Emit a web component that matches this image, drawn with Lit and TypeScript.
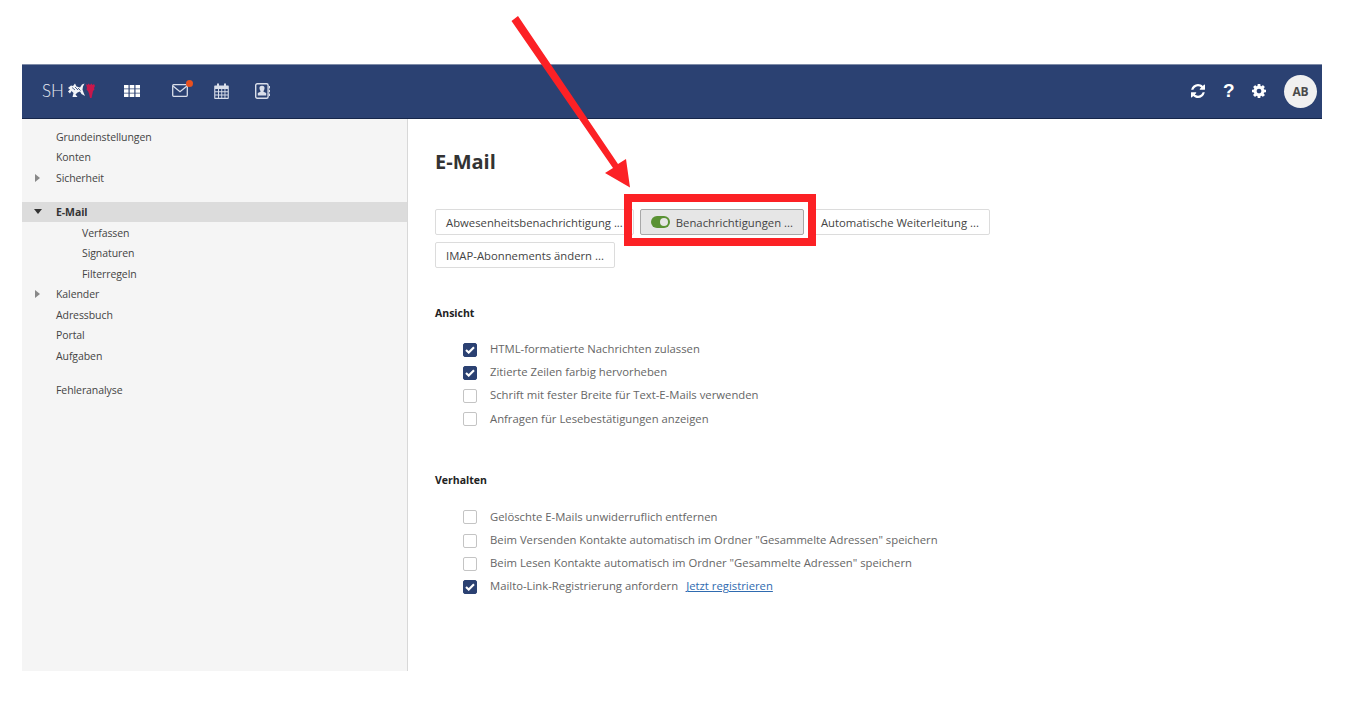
import { LitElement, html, css, svg } from "lit";
import { customElement } from "lit/decorators.js";

const navItems = [
  { label: "Grundeinstellungen" },
  { label: "Konten" },
  { label: "Sicherheit", arrow: "right", gapAfter: true },
  { label: "E-Mail", arrow: "down", active: true },
  { label: "Verfassen", sub: true },
  { label: "Signaturen", sub: true },
  { label: "Filterregeln", sub: true },
  { label: "Kalender", arrow: "right" },
  { label: "Adressbuch" },
  { label: "Portal" },
  { label: "Aufgaben", gapAfter: true },
  { label: "Fehleranalyse" },
];

const ansicht = [
  { label: "HTML-formatierte Nachrichten zulassen", on: true },
  { label: "Zitierte Zeilen farbig hervorheben", on: true },
  { label: "Schrift mit fester Breite für Text-E-Mails verwenden", on: false },
  { label: "Anfragen für Lesebestätigungen anzeigen", on: false },
];

const verhalten = [
  { label: "Gelöschte E-Mails unwiderruflich entfernen", on: false },
  { label: 'Beim Versenden Kontakte automatisch im Ordner "Gesammelte Adressen" speichern', on: false },
  { label: 'Beim Lesen Kontakte automatisch im Ordner "Gesammelte Adressen" speichern', on: false },
  { label: "Mailto-Link-Registrierung anfordern", on: true, link: "Jetzt registrieren" },
];

// lion and stag of the state logo, rough shapes only
const logo = svg`<svg class="logo" width="28" height="15" viewBox="0 0 28 15">
  <path fill="#f2f4f8" d="M0 5 L3 2.500 L5 3 L7 .5 L8.500 3.500 L12 4.500 L14 1.500 L16.500 .5 L15 3.500 L14.500 6.500 L15.500 9.500 L17 13 L13.500 11 L12 8.500 L9.500 9.500 L7.500 11.500 L9.500 14 L4.500 14 L5.500 10 L3.500 8 L2 10.500 L0 8.500 L2 6.500 Z"/>
  <path stroke="#2b4172" stroke-width=".8" fill="none" d="M4 4.500 L7 7 M7 4 L10 7 M10 5 L12.500 7.500"/>
  <path fill="#c8174b" d="M18 1 L19.500 2 L20.500 .5 L22 2 L23.500 .5 L24.500 2 L26 1 L27 3 L26 5 L26.500 6.500 L25 8 L24.500 10.500 L23.500 15 L22 15 L21 10.500 L20 8 L18.500 6.500 L19 5 Z"/>
</svg>`;

const gridIcon = svg`<svg width="16" height="12" viewBox="0 0 16 12" fill="#fff">
  <path d="M0 0h4.500v3.400H0zM5.700 0h4.600v3.400H5.700zM11.500 0H16v3.400h-4.500zM0 4.300h4.500v3.400H0zM5.700 4.300h4.600v3.400H5.700zM11.500 4.300H16v3.400h-4.500zM0 8.600h4.500V12H0zM5.700 8.600h4.600V12H5.700zM11.500 8.600H16V12h-4.500z"/>
</svg>`;

const mailIcon = svg`<svg width="16" height="13" viewBox="0 0 16 13" fill="none" stroke="#d9deea" stroke-width="1.300">
  <rect x=".7" y=".7" width="14.600" height="11.600" rx="1"/><path d="M1 2l7 5.700L15 2"/>
</svg>`;

const calendarIcon = svg`<svg width="15" height="16" viewBox="0 0 15 16">
  <path fill="#d9deea" d="M1.200 2.500H3V.5h2v2h5v-2h2v2h1.800c.6 0 1 .4 1 1V15c0 .5-.4 1-1 1H1.200c-.6 0-1-.5-1-1V3.500c0-.6.4-1 1-1z"/>
  <path fill="#2b4172" d="M1.300 6h2.700v2.200H1.300zM5 6h2.300v2.200H5zM8.200 6h2.300v2.200H8.200zM11.400 6h2.300v2.200h-2.300zM1.300 9.200h2.700v2.200H1.300zM5 9.200h2.300v2.200H5zM8.200 9.200h2.300v2.200H8.200zM11.400 9.200h2.300v2.200h-2.300zM1.300 12.400h2.700v2.400H1.300zM5 12.400h2.300v2.400H5zM8.200 12.400h2.300v2.400H8.200zM11.400 12.400h2.300v2.400h-2.300z"/>
</svg>`;

const contactIcon = svg`<svg width="15" height="16" viewBox="0 0 15 16">
  <rect x=".7" y=".7" width="12.400" height="14.600" rx="1.500" fill="none" stroke="#d9deea" stroke-width="1.400"/>
  <path fill="#d9deea" d="M14 3h1v2.500h-1zM14 6.800h1v2.500h-1zM14 10.500h1V13h-1zM7 2.800a2.500 2.500 0 0 1 2.500 2.800c0 1-.5 1.800-1 2.400v.8l2.700 1.200v2.600H2.800V10l2.700-1.200V8c-.5-.6-1-1.400-1-2.400A2.500 2.500 0 0 1 7 2.800z"/>
</svg>`;

const syncIcon = svg`<svg width="14" height="14" viewBox="0 0 1536 1536" fill="#fff">
  <path d="M1511 928q0 5-1 7-64 268-268 434.500T764 1536q-146 0-282.500-55T238 1324l-129 129q-19 19-45 19t-45-19-19-45V960q0-26 19-45t45-19h448q26 0 45 19t19 45-19 45l-137 137q71 66 161 102t187 36q134 0 250-65t186-179q11-17 53-117 8-23 30-23h192q13 0 22.500 9.500t9.500 22.500zm25-800v448q0 26-19 45t-45 19h-448q-26 0-45-19t-19-45 19-45l138-138Q969 256 768 256q-134 0-250 65T332 500q-11 17-53 117-8 23-30 23H50q-13 0-22.500-9.500T18 608v-7q65-268 270-434.500T768 0q146 0 284 55.500T1297 212l130-129q19-19 45-19t45 19 19 45z"/>
</svg>`;

const cogIcon = svg`<svg width="14" height="14" viewBox="0 0 1536 1536" fill="#fff">
  <path d="M1024 768q0-106-75-181t-181-75-181 75-75 181 75 181 181 75 181-75 75-181zm512-109v222q0 12-8 23t-20 13l-185 28q-19 54-39 91 35 50 107 138 10 12 10 25t-9 23q-27 37-99 108t-94 71q-12 0-26-9l-138-108q-44 23-91 38-16 136-29 186-7 28-36 28H657q-14 0-24.500-8.500T621 1506l-28-184q-49-16-90-37l-141 107q-10 9-25 9-14 0-25-11-126-114-165-168-7-10-7-23 0-12 8-23 15-21 51-66.500t54-70.500q-27-50-41-99L29 913q-13-2-21-12.500T0 877V655q0-12 8-23t19-13l186-28q14-46 39-92-40-57-107-138-10-12-10-24 0-10 9-23 26-36 98.500-107.500T337 135q13 0 26 10l138 107q44-23 91-38 16-136 29-186 7-28 36-28h222q14 0 24.500 8.500T915 30l28 184q49 16 90 37l142-107q9-9 24-9 13 0 25 10 129 119 165 170 7 8 7 22 0 12-8 23-15 21-51 66.500t-54 70.500q26 50 41 98l183 28q13 2 21 12.500t8 23.500z"/>
</svg>`;

const checkMark = svg`<svg width="10" height="8" viewBox="0 0 10 8" fill="none" stroke="#fff" stroke-width="2.100">
  <path d="M1 4l2.700 2.600L9 1.200"/>
</svg>`;

@customElement("app-root")
export class AppRoot extends LitElement {
  static styles = css`
    :host {
      display: block;
      position: relative;
      height: 713px;
      background: #fff;
      font-family: "Open Sans", "Liberation Sans", sans-serif;
      font-size: 10.5px;
      letter-spacing: -0.08px;
      color: #333;
      overflow: hidden;
    }

    .frame {
      display: flex;
      flex-direction: column;
      width: 1300px;
      height: 607px;
      margin-left: 22px;
      padding-top: 64px;
    }

    header {
      flex: none;
      display: flex;
      align-items: center;
      box-sizing: border-box;
      height: 55px;
      background: #2b4172;
      border-top: 1px solid #7f8ca8;
      border-bottom: 1px solid #16264a;
      color: #fff;
    }

    .brand {
      display: flex;
      align-items: center;
      gap: 4px;
      width: 102px;
      padding-left: 20px;
      padding-bottom: 2px;
      box-sizing: border-box;
    }

    .brand span {
      font-family: Lato, sans-serif;
      font-weight: 300;
      font-size: 17px;
      letter-spacing: 0;
      color: #e8ebf2;
    }

    .apps {
      display: flex;
      align-items: center;
      gap: 20px;
      padding-bottom: 2px;
    }

    .apps > * {
      display: flex;
    }

    .mail {
      position: relative;
      margin-left: 12px;
      margin-right: 6px;
    }

    .calendar {
      margin-right: 6px;
    }

    .dot {
      position: absolute;
      top: -4px;
      right: -5px;
      width: 7px;
      height: 7px;
      border-radius: 50%;
      background: #e8501f;
    }

    .tools {
      display: flex;
      align-items: center;
      margin-left: auto;
      padding-right: 5px;
    }

    .tools svg {
      display: block;
      margin-bottom: 2px;
    }

    .help {
      width: 10px;
      margin: 0 19px 2px 18px;
      font: 700 19px "Liberation Sans", sans-serif;
      line-height: 17px;
      text-align: center;
    }

    .avatar {
      display: flex;
      align-items: center;
      justify-content: center;
      width: 33px;
      height: 33px;
      margin-left: 18px;
      border-radius: 50%;
      background: #f0f0f0;
      color: #4a4a4a;
      font-size: 12px;
      font-weight: 700;
    }

    .body {
      flex: 1;
      display: flex;
      min-height: 0;
    }

    aside {
      flex: none;
      box-sizing: border-box;
      width: 386px;
      padding-top: 7.500px;
      background: #f5f5f5;
      border-right: 1px solid #d8d8d8;
    }

    .nav-row {
      display: flex;
      align-items: center;
      height: 20.500px;
      padding-left: 34px;
      color: #444;
    }

    .nav-row.sub {
      padding-left: 60px;
    }

    .nav-row.gap {
      margin-bottom: 13.500px;
    }

    .nav-row.active {
      margin-bottom: 0.500px;
      background: #dcdcdc;
      font-weight: 700;
      color: #333;
    }

    .arrow {
      position: absolute;
      width: 0;
      height: 0;
      margin-left: -21px;
    }

    .arrow.right {
      border-left: 5px solid #888;
      border-top: 4px solid transparent;
      border-bottom: 4px solid transparent;
    }

    .arrow.down {
      margin-left: -22px;
      border-top: 5px solid #333;
      border-left: 4.500px solid transparent;
      border-right: 4.500px solid transparent;
    }

    main {
      flex: 1;
      padding: 28px 0 0 27px;
    }

    h1 {
      margin: 0;
      font-size: 20px;
      line-height: 30px;
      font-weight: 700;
      letter-spacing: 0;
      color: #333;
    }

    .actions {
      display: flex;
      flex-wrap: wrap;
      gap: 7px 4px;
      width: 570px;
      margin-top: 32px;
    }

    .btn {
      display: flex;
      align-items: center;
      gap: 6px;
      box-sizing: border-box;
      height: 26px;
      padding: 0 10px;
      background: #fff;
      border: 1px solid #dcdcdc;
      border-radius: 2px;
      color: #444;
      font-size: 11.300px;
      letter-spacing: 0;
      white-space: nowrap;
    }

    .btn.on {
      margin-left: 2px;
      margin-right: 2px;
      background: #e6e6e6;
      border-color: #a8a8a8;
    }

    .toggle {
      position: relative;
      width: 19px;
      height: 12px;
      border-radius: 6px;
      background: #5a9234;
    }

    .toggle::after {
      content: "";
      position: absolute;
      top: 2px;
      right: 1.500px;
      width: 8px;
      height: 8px;
      border-radius: 50%;
      background: #e6e6e6;
    }

    h2 {
      margin: 0;
      font-size: 10.500px;
      line-height: 16px;
      font-weight: 700;
      letter-spacing: 0;
      color: #222;
    }

    .section-a {
      margin-top: 37px;
    }

    .section-b {
      margin-top: 41px;
    }

    .options {
      display: flex;
      flex-direction: column;
      margin-top: 17px;
      padding-left: 28px;
    }

    .section-b + .options {
      margin-top: 18px;
    }

    .option {
      display: flex;
      align-items: center;
      gap: 13px;
      height: 23.200px;
      color: #666;
      font-size: 11.300px;
      letter-spacing: 0;
    }

    .option-text {
      display: flex;
      gap: 8px;
      padding-bottom: 2px;
    }

    .box {
      flex: none;
      display: flex;
      align-items: center;
      justify-content: center;
      box-sizing: border-box;
      width: 14px;
      height: 14px;
      background: #fff;
      border: 1px solid #c4c4c4;
      border-radius: 2px;
    }

    .box.on {
      background: #2b4172;
      border-color: #2b4172;
    }

    .option a {
      color: #2f6bb0;
      text-decoration: underline;
    }

    .marker {
      position: absolute;
      left: 624px;
      top: 194px;
      box-sizing: border-box;
      width: 192px;
      height: 52px;
      border: 8px solid #fc2125;
    }

    .pointer {
      position: absolute;
      left: 510px;
      top: 14px;
    }
  `;

  option(item: { label: string; on: boolean; link?: string }) {
    return html`
      <div class="option">
        <span class="box ${item.on ? "on" : ""}">${item.on ? checkMark : ""}</span>
        <span class="option-text">
          <span>${item.label}</span>
          ${item.link ? html`<a href="#">${item.link}</a>` : ""}
        </span>
      </div>
    `;
  }

  render() {
    return html`
      <div class="frame">
        <header>
          <div class="brand"><span>SH</span>${logo}</div>
          <div class="apps">
            <div>${gridIcon}</div>
            <div class="mail">${mailIcon}<i class="dot"></i></div>
            <div class="calendar">${calendarIcon}</div>
            <div>${contactIcon}</div>
          </div>
          <div class="tools">
            ${syncIcon}
            <span class="help">?</span>
            ${cogIcon}
            <div class="avatar">AB</div>
          </div>
        </header>
        <div class="body">
          <aside>
            ${navItems.map(
              (item) => html`
                <div class="nav-row ${item.sub ? "sub" : ""} ${item.active ? "active" : ""} ${item.gapAfter ? "gap" : ""}">
                  ${item.arrow ? html`<i class="arrow ${item.arrow}"></i>` : ""}
                  ${item.label}
                </div>
              `
            )}
          </aside>
          <main>
            <h1>E-Mail</h1>
            <div class="actions">
              <div class="btn">Abwesenheitsbenachrichtigung ...</div>
              <div class="btn on"><i class="toggle"></i>Benachrichtigungen ...</div>
              <div class="btn">Automatische Weiterleitung ...</div>
              <div class="btn">IMAP-Abonnements ändern ...</div>
            </div>
            <h2 class="section-a">Ansicht</h2>
            <div class="options">${ansicht.map((o) => this.option(o))}</div>
            <h2 class="section-b">Verhalten</h2>
            <div class="options">${verhalten.map((o) => this.option(o))}</div>
          </main>
        </div>
      </div>
      <div class="marker"></div>
      <svg class="pointer" width="125" height="176" viewBox="0 0 125 176">
        <path fill="#fc2125" d="M1.500 7 L8 2 L108 150 L116 145 L120 173.500 L95 159 L103 154 Z"/>
      </svg>
    `;
  }
}

declare global {
  interface HTMLElementTagNameMap {
    "app-root": AppRoot;
  }
}
